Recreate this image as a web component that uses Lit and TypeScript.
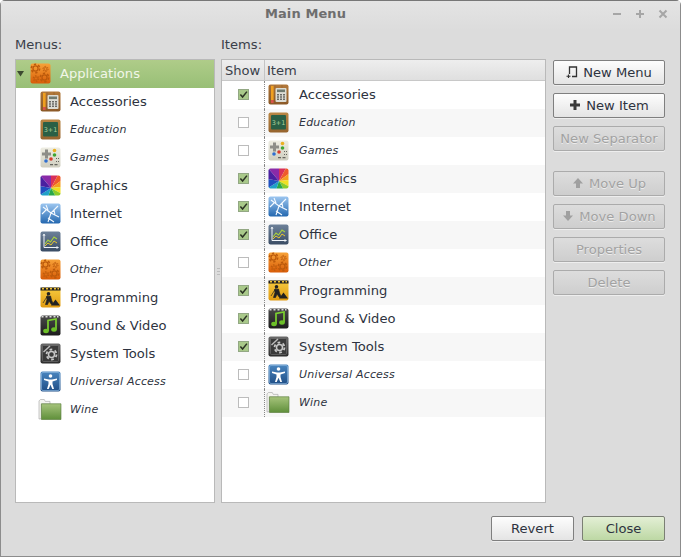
import { LitElement, html, css, svg } from "lit";
import { customElement } from "lit/decorators.js";

const grad = (id: string, a: string, b: string) => svg`<linearGradient id=${id} x1="0" y1="0" x2="0" y2="1"><stop offset="0" stop-color=${a}/><stop offset="1" stop-color=${b}/></linearGradient>`;

const gear = (cx: number, cy: number, r: number, c: string) => svg`<circle cx=${cx} cy=${cy} r=${r * 0.6} fill="none" stroke=${c} stroke-width=${r * 0.3}/><circle cx=${cx} cy=${cy} r=${r} fill="none" stroke=${c} stroke-width=${r * 0.36} stroke-dasharray=${`${r * 0.55} ${r * 0.5}`}/>`;

const frame = (id: string, a: string, b: string) => svg`<defs>${grad(id, a, b)}</defs><rect x="0.5" y="0.5" width="20" height="20" rx="2" fill=${`url(#${id})`}/>`;

const icons: Record<string, unknown> = {
  accessories: svg`${frame("ga", "#b37a3c", "#8c5a28")}
    <path d="M7 1V20M2 1V20M14 1V4M17 18V20" stroke="#7d4e20" stroke-width=".5" opacity=".6"/>
    <rect x="3" y="2" width="2.6" height="14" fill="#f0a020"/><rect x="3" y="16" width="2.6" height="3" fill="#d9534a"/>
    <rect x="7.500" y="4" width="11" height="14" rx="1" fill="#dcdcd4"/><rect x="9" y="5.500" width="8" height="2.600" fill="#6f7a70"/>
    <path d="M9 10h2v1.400H9zm3 0h2v1.400h-2zm3 0h2v1.400h-2zM9 12.300h2v1.400H9zm3 0h2v1.400h-2zm3 0h2v1.400h-2zM9 14.600h2V16H9zm3 0h2V16h-2zm3 0h2V16h-2z" fill="#6a6a66"/>`,
  education: svg`${frame("gb", "#b98644", "#96642e")}
    <rect x="3" y="3" width="15" height="14.500" rx="1" fill="#2a5f45"/>
    <text x="10.500" y="12.500" font-size="6.500" font-family="DejaVu Sans" text-anchor="middle" fill="#a9cf9c">3+1</text>`,
  games: svg`${frame("gc", "#eeede2", "#cfcec0")}
    <path d="M5 2.500H8V5.500H11V8.500H8V11.500H5V8.500H2V5.500H5z" fill="#8e8e88"/>
    <circle cx="14.500" cy="3.500" r="1.800" fill="#eab020"/><circle cx="14.500" cy="8" r="1.800" fill="#3fa534"/>
    <circle cx="11" cy="12" r="1.800" fill="#d83a2a"/><circle cx="6" cy="14" r="1.800" fill="#2f6fd0"/>
    <path d="M10 17h3v1.200h-3zm4.500 0h3v1.200h-3zM16 11h1v1h-1zm2 0h1v1h-1zm-2 3h1v1h-1zm2 0h1v1h-1z" fill="#66665f"/>`,
  graphics: svg`<defs><clipPath id="gd"><rect x="0.500" y="0.500" width="20" height="20" rx="2"/></clipPath></defs>
    <g clip-path="url(#gd)">
      <path d="M11 13L0 0H11z" fill="#8a2aa8"/><path d="M11 13L11 0H18z" fill="#d8305a"/>
      <path d="M11 13L18 0H22V5z" fill="#ef5a2a"/><path d="M11 13L22 5V12z" fill="#f5a020"/>
      <path d="M11 13L22 12V19z" fill="#f0e020"/><path d="M11 13L22 19V22H16z" fill="#8ccc28"/>
      <path d="M11 13L16 22H8z" fill="#2aa84a"/><path d="M11 13L8 22H0V20z" fill="#20a0c8"/>
      <path d="M11 13L0 20V11z" fill="#2050c0"/><path d="M11 13L0 11V0z" fill="#4a20a0"/>
    </g>`,
  internet: svg`${frame("ge", "#9cc6f0", "#2468b0")}
    <path d="M3 4L11 10L18 3M11 10L8 19M11 10L19 14M6 7L2 11M14 6.500L15 12M8 15L14 19M6 2L8 7" fill="none" stroke="#f4f9ff" stroke-width="1.100"/>`,
  office: svg`${frame("gf", "#6d8199", "#3a4c64")}
    <path d="M4 3V16.500H18" fill="none" stroke="#f0f4f8" stroke-width="1"/><path d="M3 5L4 3L5 5M16.500 15.500L18.500 16.500L16.500 17.500" fill="none" stroke="#f0f4f8" stroke-width=".8"/>
    <path d="M5 13L8 9L10.500 11L14 6L17 8" fill="none" stroke="#a8d040" stroke-width="1.200"/>
    <path d="M5 15L8 12L11 14L14 10L17 12" fill="none" stroke="#e8c830" stroke-width="1"/>`,
  other: svg`${frame("gg", "#f7a238", "#d85c08")}
    ${gear(5.500, 5.500, 4.200, "#bb5a0c")}${gear(15.500, 6, 2.600, "#bb5a0c")}${gear(6, 15.500, 2.800, "#bb5a0c")}${gear(14.500, 14.500, 4.200, "#bb5a0c")}`,
  programming: svg`${frame("gh", "#f7cc40", "#e09a10")}
    <rect x="0.500" y="0.500" width="20" height="3" fill="#222"/><path d="M2 1h2v1.500H2zm4 0h2v1.500H6zm4 0h2v1.500h-2zm4 0h2v1.500h-2zm3.500 0h1.500v1.500h-1.500z" fill="#f0c030"/>
    <circle cx="8.500" cy="6.800" r="1.800" fill="#222"/><path d="M6.500 9.500L10.500 9L11.500 13L13 16.500L11.500 17.500L9 14L7.500 17.500H5.500L7 12.500zM3 16L8 8" fill="#222" stroke="#222" stroke-width=".7"/><path d="M11 18.500L15.500 12.500L20 18.500z" fill="#222"/>`,
  sound: svg`${frame("gi", "#4a4a4a", "#1c1c1c")}
    <path d="M1.500 1h2v1.500h-2zm4 0h2v1.500h-2zm4 0h2v1.500h-2zm4 0h2v1.500h-2zm3.500 0h1.500v1.500H17z" fill="#ddd"/>
    <path d="M8 16V5.500L16 4V14.500" fill="none" stroke="#7cd030" stroke-width="1.700"/>
    <ellipse cx="6" cy="16" rx="2.800" ry="2.200" fill="#6cc028"/><ellipse cx="14" cy="14.500" rx="2.800" ry="2.200" fill="#6cc028"/>`,
  system: svg`${frame("gj", "#6a6a6a", "#2c2c2c")}
    <rect x="2.500" y="2.500" width="16" height="16" rx="1" fill="#3a3a3a" stroke="#777" stroke-width=".6"/>
    ${gear(11.500, 11.500, 5, "#c8c8c8")}<path d="M3.500 9L10 3" stroke="#bbb" stroke-width="1.500"/>`,
  universal: svg`${frame("gk", "#4a86c0", "#1f4e86")}
    <rect x="1.500" y="1.500" width="18" height="18" rx="1.500" fill="none" stroke="#8ab4dc" stroke-width=".7"/>
    <circle cx="10.500" cy="5" r="1.800" fill="#fff"/><path d="M4 7.500L9 8.500H12L17 7.500V9L12.500 10.500V13L14 18H12.300L10.500 13.800L8.700 18H7L8.500 13V10.500L4 9z" fill="#fff"/>`,
  wine: svg`<defs>${grad("gl", "#a6c47c", "#5f8f3a")}</defs>
    <path d="M0.500 2V21L3 20.500V5.500H12V2.500H7L6 .5H2z" fill="#f4f4f0" stroke="#aaa" stroke-width=".7"/>
    <path d="M3 5H23.500V21.500H3z" fill="url(#gl)" stroke="#5d7f40" stroke-width=".7"/>`,
};

const ic = (k: string) => html`<svg class="ic ${k === "wine" ? "wide" : ""}" viewBox=${k === "wine" ? "0 0 24 22" : "0 0 21 21"}>${icons[k]}</svg>`;

type Row = { k: string; n: string; on: boolean };
const rows: Row[] = [
  { k: "accessories", n: "Accessories", on: true },
  { k: "education", n: "Education", on: false },
  { k: "games", n: "Games", on: false },
  { k: "graphics", n: "Graphics", on: true },
  { k: "internet", n: "Internet", on: true },
  { k: "office", n: "Office", on: true },
  { k: "other", n: "Other", on: false },
  { k: "programming", n: "Programming", on: true },
  { k: "sound", n: "Sound & Video", on: true },
  { k: "system", n: "System Tools", on: true },
  { k: "universal", n: "Universal Access", on: false },
  { k: "wine", n: "Wine", on: false },
];

const gl = {
  menu: html`<svg class="g" viewBox="0 0 12 12"><path d="M3.500 8V1H10.500V10.500H6" fill="none" stroke="#333" stroke-width="1.300"/><path d="M2.500 8.500v3.500M.5 10.250h4" stroke="#333" stroke-width="1.200" fill="none"/></svg>`,
  plus: html`<svg class="g" viewBox="0 0 12 12"><path d="M4.500 1h3v3.500H11v3H7.500V11h-3V7.500H1v-3h3.500z" fill="#3a3a3a"/></svg>`,
  up: html`<svg class="g" viewBox="0 0 12 12"><path d="M6 1L11 6.500H8V11H4V6.500H1z" fill="#a0a0a0"/></svg>`,
  down: html`<svg class="g" viewBox="0 0 12 12"><path d="M6 11L1 5.500H4V1H8V5.500H11z" fill="#a0a0a0"/></svg>`,
};

@customElement("app-root")
export class AppRoot extends LitElement {
  static styles = css`
    :host { display: block; width: 681px; height: 557px; background: #fff; font-family: "DejaVu Sans", sans-serif; font-size: 13.1px; color: #2e3340; }
    * { box-sizing: border-box; }
    .win { height: 557px; display: flex; flex-direction: column; background: #dcdcdc; border: 1px solid #8c8c8c; border-top-color: #777; border-radius: 5px 5px 0 0; }
    .title { height: 29px; flex: none; display: flex; align-items: center; justify-content: center; position: relative; background: linear-gradient(#e4e4e4, #dcdcdc); padding-right: 70px; }
    .title b { font-size: 13px; color: #6e6e6e; margin-top: -5px; letter-spacing: .1px; }
    .ctl { position: absolute; right: 9px; top: 7px; display: flex; gap: 7px; }
    .ctl svg { width: 16px; height: 12px; display: block; }
    .main { flex: none; display: flex; padding: 0 15px 0 14px; height: 474px; }
    .col { display: flex; flex-direction: column; }
    .lbl { height: 29px; flex: none; padding-top: 7px; color: #3a3f4a; }
    .menus { width: 200px; }
    .items { width: 325px; margin-left: 6px; }
    .panel { flex: none; height: 444px; background: #fff; border: 1px solid #b9b9b9; position: relative; }
    .row { height: 28px; display: flex; align-items: center; }
    .ic { width: 21px; height: 21px; flex: none; display: block; margin-bottom: 2px; }
    .nm { margin-left: 9px; margin-bottom: 2px; white-space: nowrap; }
    .it { font-style: italic; font-size: 11px; letter-spacing: .2px; }
    .sel { height: 28px; background: linear-gradient(#afcc89, #98bf76); color: #f1f6e8; padding-left: 14px; position: relative; }
    .tree { position: absolute; left: 1px; top: 10px; width: 7px; height: 7px; }
    .m { padding-left: 24px; }
    .m .wide { width: 24px; margin-left: -2px; margin-right: -1px; }
    .hdr { height: 21px; display: flex; background: linear-gradient(#eeeeee, #dfdfdf); border-bottom: 1px solid #c8c8c8; line-height: 21px; color: #3a3f4a; }
    .hdr .s { width: 43px; padding-left: 3px; border-right: 1px solid #c4c4c4; }
    .hdr .i { padding-left: 2px; flex: 1; }
    .r:nth-child(even) { background: #f7f7f7; }
    .chkc { width: 43px; height: 100%; display: flex; align-items: center; justify-content: center; flex: none; padding-bottom: 1px; border-right: 1px dotted #888; }
    .chk { width: 11px; height: 11px; border: 1px solid #bcbcbc; background: #fff; display: block; }
    .chk.on { background: #a9c98a; border-color: #93a884; }
    .chk svg { display: block; width: 9px; height: 9px; }
    .r .ic { margin-left: 3px; }
    .r .nm { margin-left: 10px; }
    .r .wide { width: 24px; margin-left: 1px; margin-right: -1px; }
    .btns { width: 112px; margin-left: 7px; padding-top: 30px; gap: 8px; }
    .btn { height: 25px; flex: none; display: flex; align-items: center; justify-content: center; gap: 5px; padding-bottom: 1px; border: 1px solid #7f7f7f; border-radius: 2px; background: linear-gradient(#fdfdfd, #e4e4e4); box-shadow: 0 1px 0 rgba(255,255,255,.5); color: #2e3340; white-space: nowrap; }
    .btn.off { border-color: #ababab; background: linear-gradient(#dddddd, #cecece); color: #a2a2a2; text-shadow: 0 1px 0 rgba(255,255,255,.6); }
    .spacer { height: 4px; flex: none; }
    .g { width: 12px; height: 12px; display: block; flex: none; }
    .foot { flex: none; display: flex; justify-content: flex-end; gap: 8px; padding: 12px 15px 0 0; }
    .foot .btn { width: 83px; }
    .btn.ok { background: linear-gradient(#e3efd5, #bdd8a4); border-color: #7b7f74; }
    .grip { position: absolute; left: 201px; top: 208px; width: 3px; height: 8px; background: repeating-linear-gradient(#bdbdbd 0 1px, transparent 1px 3px); }
  `;

  render() {
    return html`<div class="win">
      <div class="title"><b>Main Menu</b>
        <div class="ctl">
          <svg viewBox="0 0 16 12"><path d="M4 6H12" stroke="#a6a6a6" stroke-width="2"/></svg>
          <svg viewBox="0 0 16 12"><path d="M4 6H12M8 2V10" stroke="#a6a6a6" stroke-width="2"/></svg>
          <svg viewBox="0 0 16 12"><path d="M4.500 2.500L11.500 9.500M11.500 2.500L4.500 9.500" stroke="#a6a6a6" stroke-width="2"/></svg>
        </div>
      </div>
      <div class="main">
        <div class="col menus">
          <div class="lbl">Menus:</div>
          <div class="panel">
            <div class="grip"></div>
            <div class="row sel">
              <svg class="tree" viewBox="0 0 7 7"><path d="M0 1H7L3.500 6.500z" fill="#3c4a30"/></svg>
              ${ic("other")}<span class="nm">Applications</span>
            </div>
            ${rows.map((r) => html`<div class="row m">${ic(r.k)}<span class="nm ${r.on ? "" : "it"}">${r.n}</span></div>`)}
          </div>
        </div>
        <div class="col items">
          <div class="lbl">Items:</div>
          <div class="panel">
            <div class="hdr"><div class="s">Show</div><div class="i">Item</div></div>
            <div>
              ${rows.map((r) => html`<div class="row r">
                <div class="chkc"><span class="chk ${r.on ? "on" : ""}">${r.on ? html`<svg viewBox="0 0 10 10"><path d="M1.500 5L4 7.800L8.800 1.800" fill="none" stroke="#2c3325" stroke-width="1.700"/></svg>` : ""}</span></div>
                ${ic(r.k)}<span class="nm ${r.on ? "" : "it"}">${r.n}</span>
              </div>`)}
            </div>
          </div>
        </div>
        <div class="col btns">
          <div class="btn">${gl.menu}New Menu</div>
          <div class="btn">${gl.plus}New Item</div>
          <div class="btn off">New Separator</div>
          <div class="spacer"></div>
          <div class="btn off">${gl.up}Move Up</div>
          <div class="btn off">${gl.down}Move Down</div>
          <div class="btn off">Properties</div>
          <div class="btn off">Delete</div>
        </div>
      </div>
      <div class="foot"><div class="btn">Revert</div><div class="btn ok">Close</div></div>
    </div>`;
  }
}
